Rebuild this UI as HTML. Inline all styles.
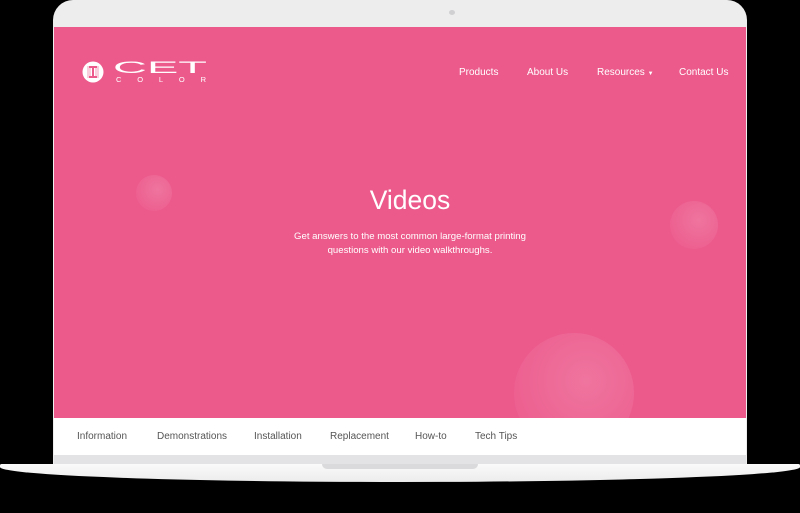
<!DOCTYPE html>
<html><head><meta charset="utf-8"><style>
*{margin:0;padding:0;box-sizing:border-box}
body{width:800px;height:513px;background:#000;position:relative;overflow:hidden;font-family:"Liberation Sans",sans-serif}
.lid{position:absolute;left:53px;top:0;width:694px;height:470px;background:#ededee;border-radius:20px 20px 0 0}
.cam{position:absolute;left:396px;top:10px;width:6px;height:5px;border-radius:50%;background:#d0d0d2}
.screen{position:absolute;left:54px;top:27px;width:692px;height:391px;background:#ec5a8c;overflow:hidden}
.c{position:absolute;border-radius:50%;background:radial-gradient(circle at 60% 40%,rgba(255,255,255,.16),rgba(255,255,255,.04) 70%,rgba(255,255,255,0))}
.nav{position:absolute;top:40px;color:#fff;font-size:10px}
.tabs{position:absolute;left:54px;top:418px;width:692px;height:37px;background:#fff}
.tabs span{position:absolute;top:13px;font-size:10px;color:#555}
.bez{position:absolute;left:54px;top:455px;width:692px;height:10px;background:#e3e3e5}
.base{position:absolute;left:0;top:464px;width:800px;height:18px;background:linear-gradient(#fafafa,#ececec);border-radius:2px 2px 60% 60%/2px 2px 100% 100%}
.notch{position:absolute;left:322px;top:464px;width:156px;height:5px;background:#dadadc;border-radius:0 0 6px 6px}
</style></head><body>
<div class="lid"><div class="cam"></div></div>
<div class="screen">
 <div class="c" style="left:82px;top:148px;width:36px;height:36px"></div>
 <div class="c" style="left:616px;top:174px;width:48px;height:48px"></div>
 <div class="c" style="left:460px;top:306px;width:120px;height:120px"></div>
 <svg style="position:absolute;left:28px;top:34px" width="24" height="24" viewBox="0 0 24 24">
  <circle cx="11" cy="11" r="10.5" fill="#fff"/>
  <g stroke="#ec5a8c" stroke-width="0.6"><line x1="6" y1="5" x2="6" y2="17"/><line x1="8" y1="5" x2="8" y2="17"/><line x1="14" y1="5" x2="14" y2="17"/><line x1="16" y1="5" x2="16" y2="17"/></g>
  <rect x="7" y="5" width="8" height="2" fill="#ec5a8c"/><rect x="7" y="15" width="8" height="2" fill="#ec5a8c"/><rect x="10" y="7" width="2" height="8" fill="#ec5a8c"/>
 </svg>
 <svg style="position:absolute;left:58px;top:32px" width="100" height="26" viewBox="0 0 100 26">
  <text x="1" y="14" font-family="Liberation Sans" font-size="16.5" fill="#fff" textLength="94" lengthAdjust="spacingAndGlyphs">CET</text>
  <text x="4" y="23" font-family="Liberation Sans" font-size="7.5" fill="#fff" textLength="90" lengthAdjust="spacing">COLOR</text>
 </svg>
 <div class="nav" style="left:405px">Products</div>
 <div class="nav" style="left:473px">About Us</div>
 <div class="nav" style="left:543px">Resources <span style="font-size:6px">▼</span></div>
 <div class="nav" style="left:625px">Contact Us</div>
 <div style="position:absolute;left:10px;width:692px;top:158px;text-align:center;color:#fff;font-size:26.5px;font-weight:300">Videos</div>
 <div style="position:absolute;left:10px;width:692px;top:203px;text-align:center;color:#fff;font-size:9.6px;line-height:14px">Get answers to the most common large-format printing<br>questions with our video walkthroughs.</div>
</div>
<div class="tabs">
 <span style="left:23px">Information</span>
 <span style="left:103px">Demonstrations</span>
 <span style="left:200px">Installation</span>
 <span style="left:276px">Replacement</span>
 <span style="left:361px">How-to</span>
 <span style="left:421px">Tech Tips</span>
</div>
<div class="bez"></div>
<div class="base"></div>
<div class="notch"></div>
</body></html>
